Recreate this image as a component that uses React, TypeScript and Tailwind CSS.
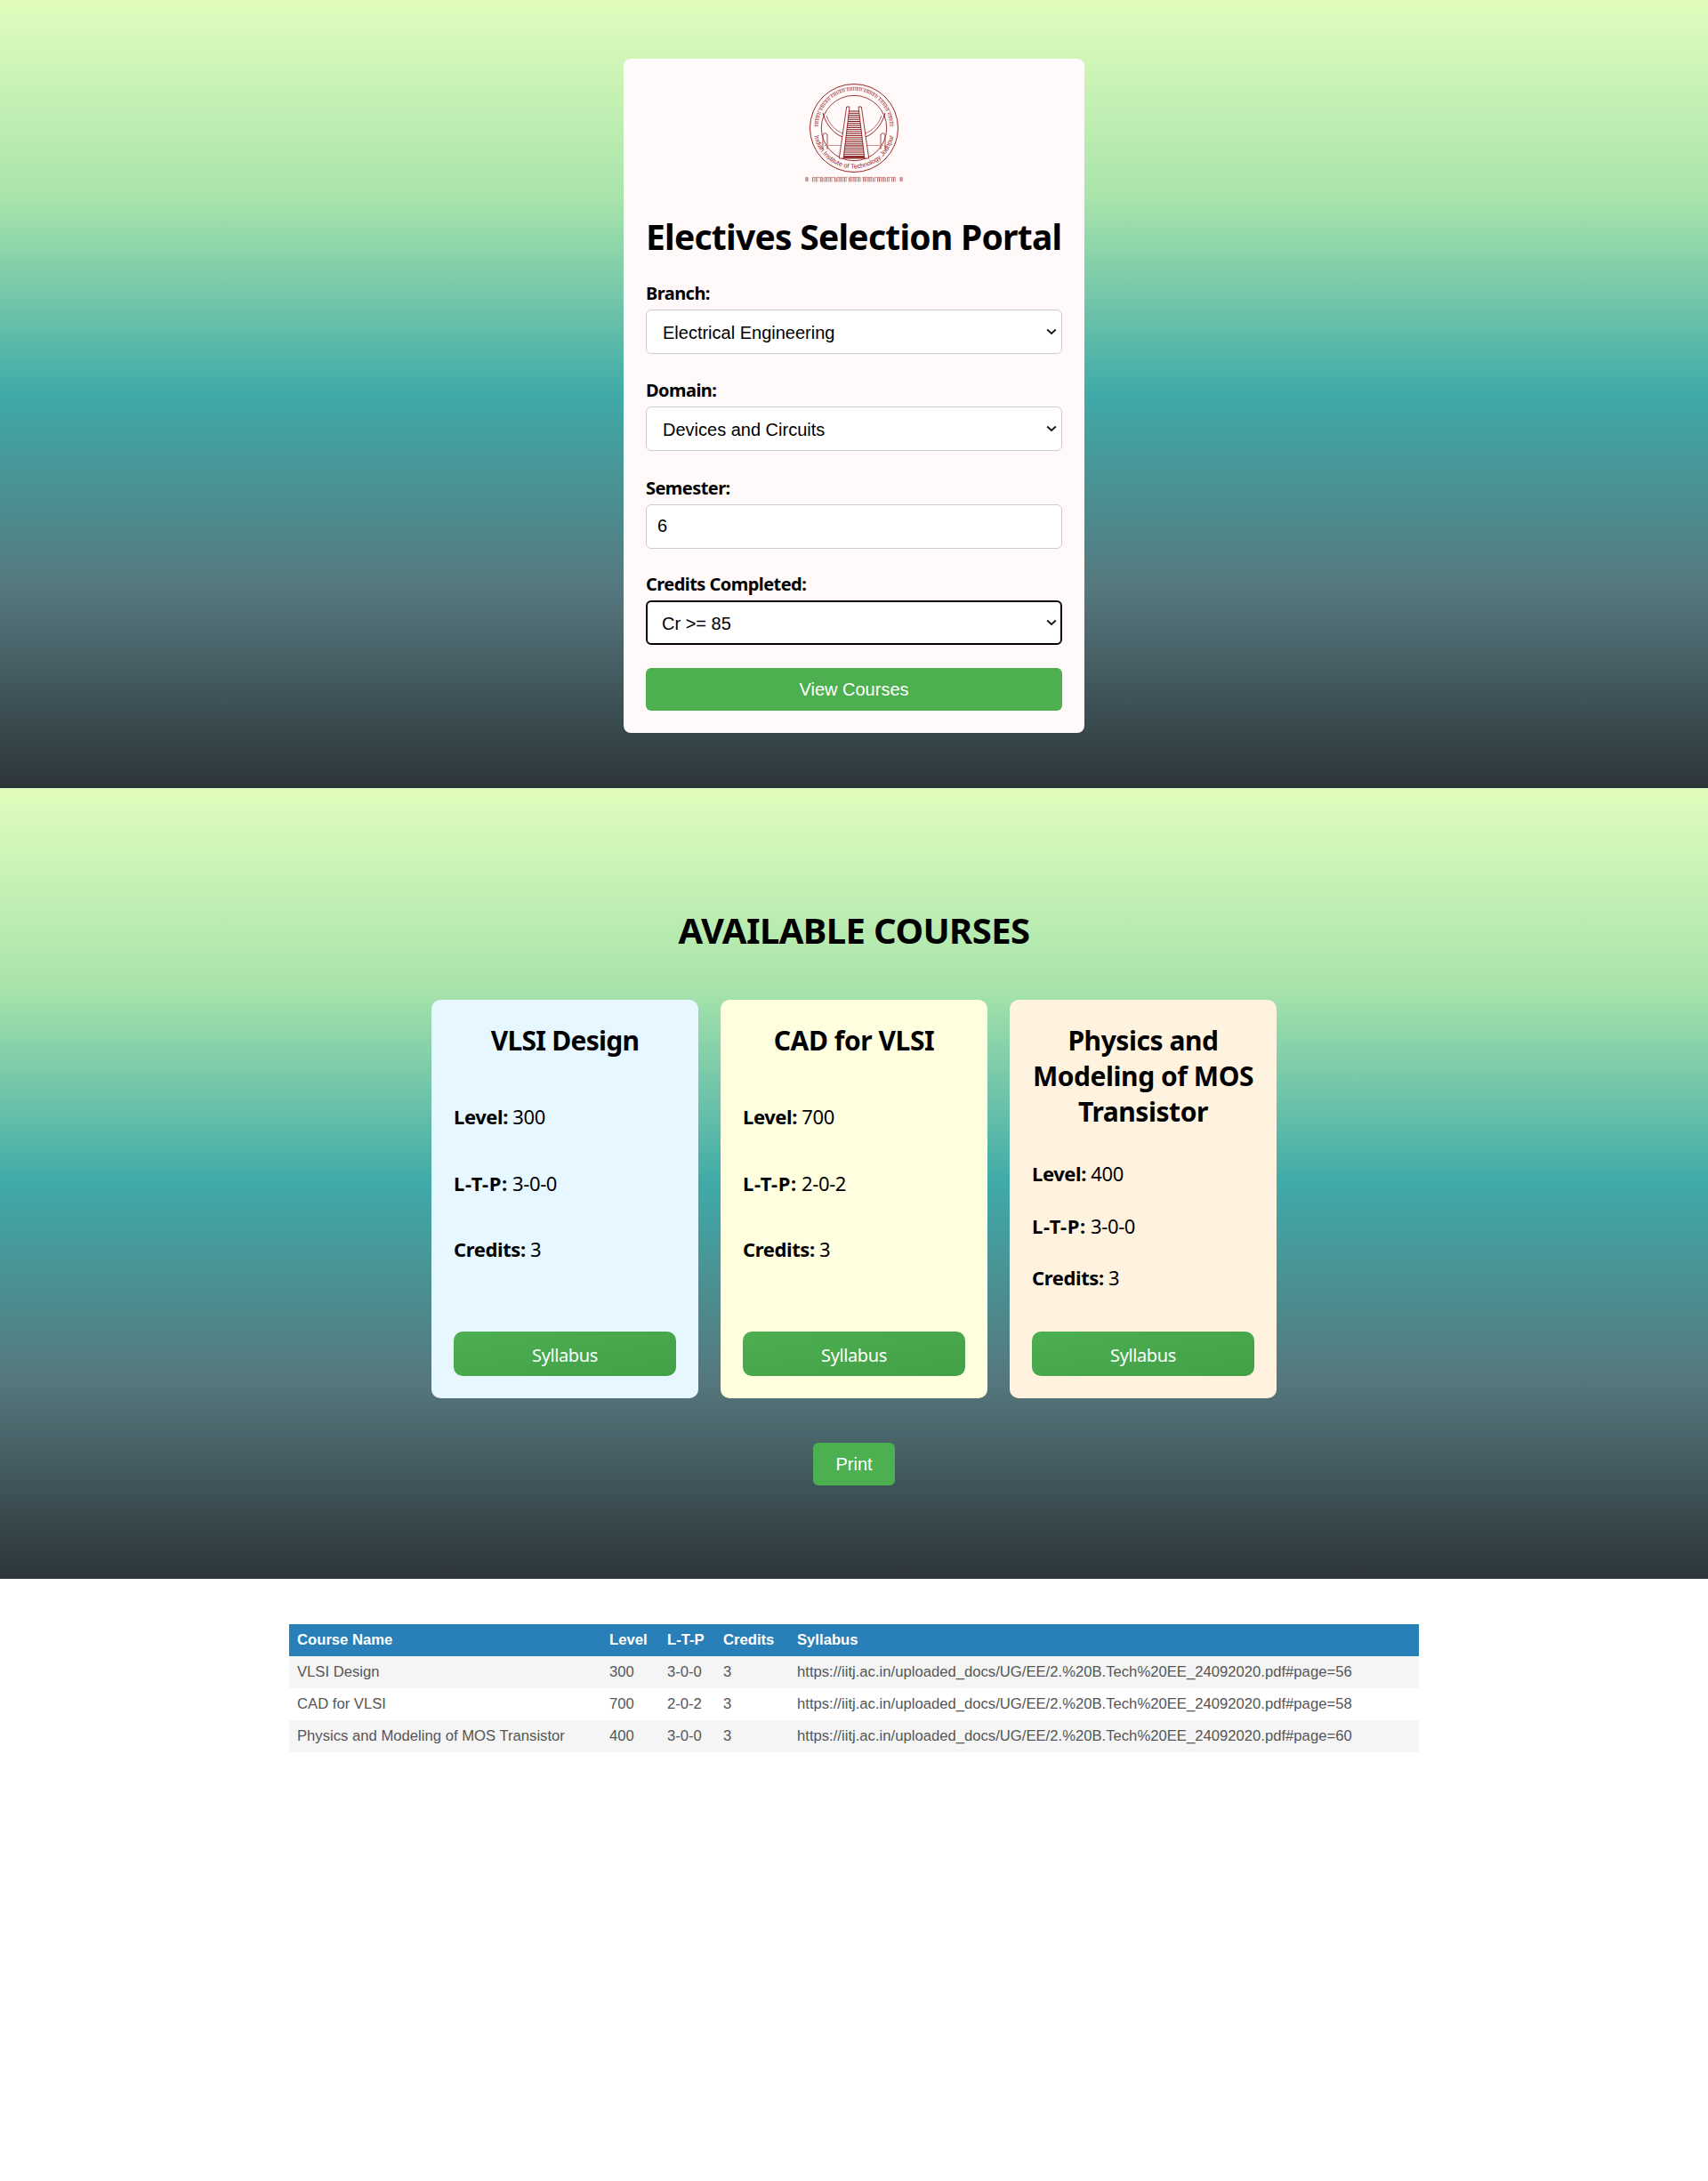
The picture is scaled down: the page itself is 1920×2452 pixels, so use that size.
import React from "react";

const seg = "font-['Noto_Sans',sans-serif]";
const ari = "font-['Liberation_Sans',Arial,sans-serif]";
const RED = "#962525";

function Logo() {
  const stairs = [];
  for (let i = 0; i < 23; i++) {
    const y = 33 + i * 2.3;
    const t = (y - 28) / 57;
    stairs.push(<line key={i} x1={50 - 7 * t} x2={60 + 7 * t} y1={y} y2={y} stroke="#7f1515" strokeWidth="1" />);
  }
  return (
    <svg width="110" height="118" viewBox="0 0 110 118" fill="none" className="block">
      <circle cx="55" cy="52" r="49.5" stroke={RED} strokeWidth="1" />
      <circle cx="55" cy="52" r="36.7" stroke={RED} strokeWidth="0.9" />
      <defs>
        <path id="lowerArc" d="M9.5 52 A45.5 45.5 0 0 0 100.5 52" />
      </defs>
      <path d="M13 50 A42 42 0 0 1 97 50" stroke={RED} strokeWidth="4" strokeDasharray="0.8 1 0.5 1.2 0.9 0.9 0.6 1.1 0.8 1 0.5 1.2 0.9 0.8 0.5 1.3 0.8 1 0.6 3" opacity="0.8" />
      <path d="M11 50 A44 44 0 0 1 99 50" stroke={RED} strokeWidth="0.5" strokeDasharray="15 1.5" opacity="0.8" />
      <text fontSize="7.4" fill={RED} fontFamily="Liberation Sans, sans-serif">
        <textPath href="#lowerArc" startOffset="50%" textAnchor="middle">Indian Institute of Technology Jodhpur</textPath>
      </text>
      <path d="M20 35 C24 50 34 60 45 63" stroke={RED} strokeWidth="1" />
      <path d="M24 38 C28 50 37 57 46 59" stroke={RED} strokeWidth="0.7" />
      <path d="M90 35 C86 50 76 60 65 63" stroke={RED} strokeWidth="1" />
      <path d="M86 38 C82 50 73 57 64 59" stroke={RED} strokeWidth="0.7" />
      <path d="M20 76 V59 q2.5 -3 5 0 V76 M90 76 V59 q-2.5 -3 -5 0 V76" stroke={RED} strokeWidth="0.8" />
      <path d="M22 71.5 H88" stroke="#c98a8a" strokeWidth="0.9" />
      <path d="M38.3 86 L46.7 28 H50 L43.3 85 H66.7 L60 28 H63.3 L71.7 86 Z" stroke={RED} strokeWidth="0.9" fill="#fff9f9" />
      {stairs}
      <path d="M43 85 H67" stroke="#7f1515" strokeWidth="1.4" />
      <path d="M1 107 v5 M2.8 107 v5 M107.2 107 v5 M109 107 v5" stroke={RED} strokeWidth="0.8" />
      <path d="M8 110 H102" stroke={RED} strokeWidth="5" strokeDasharray="0.9 1 0.6 1.2 1 0.9 0.6 2.6 0.9 0.9 1 1 0.6 1.1 0.9 0.9" opacity="0.75" />
      <path d="M8 107.4 H102" stroke={RED} strokeWidth="0.5" strokeDasharray="12 2" opacity="0.8" />
    </svg>
  );
}

const Label = ({ children }: { children: React.ReactNode }) => (
  <label className={`block text-[20px] leading-[25px] font-bold tracking-[-0.55px] text-black ${seg}`}>{children}</label>
);

const selectBase = `block w-full h-[50px] rounded-[6px] bg-white text-[20px] text-black appearance-none ${ari}`;

function Sel({ value, border, children }: { value: string; border: string; children: React.ReactNode }) {
  return (
    <div className="relative mt-[6px]">
      <select defaultValue={value} className={`${selectBase} pt-[1px] ${border}`}>{children}</select>
      <svg width="12" height="8" viewBox="0 0 12 8" fill="none" className="pointer-events-none absolute right-[6px] top-[21px]">
        <path d="M1.2 1.5 L6 6 L10.8 1.5" stroke="#1a1a1a" strokeWidth="2" />
      </svg>
    </div>
  );
}

function Course({ bg, title, level, ltp, credits, first, gap, tracking }: { bg: string; title: string; level: string; ltp: string; credits: string; first: string; gap: string; tracking: string }) {
  const row = "text-[22px] leading-[28px] text-black tracking-[-0.4px]";
  return (
    <div className={`flex w-[300px] h-[448px] flex-col rounded-[10px] p-[25px] ${bg} ${seg}`}>
      <h3 className={`pt-[1px] text-center text-[30px] leading-[40px] font-bold text-black ${tracking}`}>{title}</h3>
      <div className={`flex flex-col ${first} ${gap}`}>
        <p className={row}><b>Level:</b> {level}</p>
        <p className={row}><b className="tracking-[0.6px]">L-T-P:</b> {ltp}</p>
        <p className={row}><b>Credits:</b> {credits}</p>
      </div>
      <button className="mt-auto h-[50px] w-full rounded-[10px] bg-gradient-to-br from-[#4caf50] to-[#43a047] pt-[3px] text-[20px] text-white tracking-[-0.4px]">Syllabus</button>
    </div>
  );
}

const rows = [
  ["VLSI Design", "300", "3-0-0", "3", "https://iitj.ac.in/uploaded_docs/UG/EE/2.%20B.Tech%20EE_24092020.pdf#page=56"],
  ["CAD for VLSI", "700", "2-0-2", "3", "https://iitj.ac.in/uploaded_docs/UG/EE/2.%20B.Tech%20EE_24092020.pdf#page=58"],
  ["Physics and Modeling of MOS Transistor", "400", "3-0-0", "3", "https://iitj.ac.in/uploaded_docs/UG/EE/2.%20B.Tech%20EE_24092020.pdf#page=60"],
];

export default function App() {
  const grad = "bg-[linear-gradient(to_bottom,#e1fdbd_0%,#a9e4ab_25%,#40aaa8_50%,#55777d_75%,#2c3539_100%)]";
  return (
    <div className="min-h-[2452px] bg-white">
      <section className={`h-[886px] pt-[66px] ${grad}`}>
        <div className="mx-auto h-[758px] w-[518px] rounded-[8px] bg-[#fff9f9] px-[25px] pt-[26px]">
          <div className="flex justify-center"><Logo /></div>
          <h1 className={`mt-[31px] text-[39px] leading-[50px] font-bold text-black tracking-[-0.75px] whitespace-nowrap ${seg}`}>Electives Selection Portal</h1>
          <div className="mt-[26px]"><Label>Branch:</Label></div>
          <Sel value="ee" border="border border-[#cccccc] pl-[18px]"><option value="ee">Electrical Engineering</option></Sel>
          <div className="mt-[28px]"><Label>Domain:</Label></div>
          <Sel value="dc" border="border border-[#cccccc] pl-[18px]"><option value="dc">Devices and Circuits</option></Sel>
          <div className="mt-[29px]"><Label>Semester:</Label></div>
          <input defaultValue="6" className={`${selectBase} mt-[6px] border border-[#cccccc] px-[12px] pb-[2px]`} />
          <div className="mt-[27px]"><Label>Credits Completed:</Label></div>
          <Sel value="85" border="border-2 border-black pl-[16px]"><option value="85">Cr &gt;= 85</option></Sel>
          <button className={`mt-[26px] h-[48px] w-full rounded-[6px] bg-[#4caf50] pb-[1px] text-[20px] text-white ${ari}`}>View Courses</button>
        </div>
      </section>
      <section className={`h-[889px] pt-[135px] ${grad}`}>
        <h2 className={`text-center text-[40px] leading-[50px] font-bold text-black tracking-[-0.6px] ${seg}`}>AVAILABLE COURSES</h2>
        <div className="mt-[53px] flex justify-center gap-[25px]">
          <Course bg="bg-[#e6f7ff]" title="VLSI Design" level="300" ltp="3-0-0" credits="3" first="mt-[51px]" gap="gap-[46.5px]" tracking="tracking-[-0.75px]" />
          <Course bg="bg-[#ffffe0]" title="CAD for VLSI" level="700" ltp="2-0-2" credits="3" first="mt-[51px]" gap="gap-[46.5px]" tracking="tracking-[-0.45px]" />
          <Course bg="bg-[#fff3e0]" title="Physics and Modeling of MOS Transistor" level="400" ltp="3-0-0" credits="3" first="mt-[35px]" gap="gap-[30.5px]" tracking="tracking-[-0.45px]" />
        </div>
        <div className="mt-[50px] flex justify-center">
          <button className={`h-[48px] w-[92px] rounded-[6px] bg-[#4caf50] text-[20px] text-white ${ari}`}>Print</button>
        </div>
      </section>
      <div className={`mx-auto mt-[51px] w-[1270px] ${ari}`}>
        <table className="w-full border-collapse text-[16.67px] text-[#555555]">
          <thead>
            <tr className="h-[36px] bg-[#2980b9] text-left font-bold text-white">
              <th className="w-[360px] pb-[1px] pl-[9px]">Course Name</th>
              <th className="w-[65px] pb-[1px] pl-0">Level</th>
              <th className="w-[63px] pb-[1px]">L-T-P</th>
              <th className="w-[83px] pb-[1px]">Credits</th>
              <th className="pb-[1px]">Syllabus</th>
            </tr>
          </thead>
          <tbody>
            {rows.map((r, i) => (
              <tr key={i} className={`h-[36px] ${i % 2 === 0 ? "bg-[#f5f5f5]" : "bg-white"}`}>
                <td className="pb-[1px] pl-[9px]">{r[0]}</td>
                <td className="pb-[1px]">{r[1]}</td>
                <td className="pb-[1px]">{r[2]}</td>
                <td className="pb-[1px]">{r[3]}</td>
                <td className="pb-[1px]">{r[4]}</td>
              </tr>
            ))}
          </tbody>
        </table>
      </div>
    </div>
  );
}
